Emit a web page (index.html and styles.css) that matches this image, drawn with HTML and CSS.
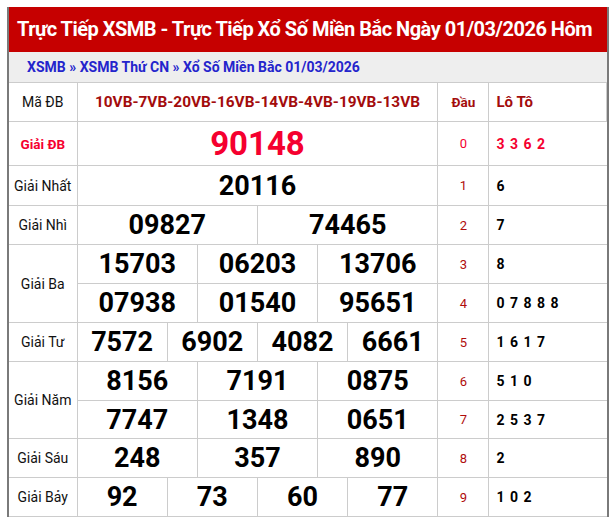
FILE: index.html
```html
<!DOCTYPE html>
<html lang="vi">
<head>
<meta charset="utf-8">
<link rel="stylesheet" href="styles.css">
</head>
<body>
<div class="box">
  <h1 class="title">Trực Tiếp XSMB - Trực Tiếp Xổ Số Miền Bắc Ngày 01/03/2026 Hôm</h1>
  <div class="crumb"><a>XSMB</a> » <a>XSMB Thứ CN</a> » <a>Xổ Số Miền Bắc 01/03/2026</a></div>
  <table class="kq">
    <colgroup>
      <col class="c-lbl">
      <col class="c-n"><col class="c-n"><col class="c-n"><col class="c-n"><col class="c-n"><col class="c-n">
      <col class="c-n"><col class="c-n"><col class="c-n"><col class="c-n"><col class="c-n"><col class="c-n">
      <col class="c-dau">
      <col class="c-lo">
    </colgroup>
    <tr class="r-ma">
      <td class="lbl">Mã ĐB</td>
      <td colspan="12" class="ma">10VB-7VB-20VB-16VB-14VB-4VB-19VB-13VB</td>
      <td class="dau-h">Đầu</td>
      <td class="lo-h">Lô Tô</td>
    </tr>
    <tr class="r-db">
      <td class="lbl red">Giải ĐB</td>
      <td colspan="12" class="num db">90148</td>
      <td class="dau d0">0</td>
      <td class="lo red">3 3 6 2</td>
    </tr>
    <tr class="r-1">
      <td class="lbl">Giải Nhất</td>
      <td colspan="12" class="num">20116</td>
      <td class="dau">1</td>
      <td class="lo">6</td>
    </tr>
    <tr>
      <td class="lbl">Giải Nhì</td>
      <td colspan="6" class="num">09827</td>
      <td colspan="6" class="num">74465</td>
      <td class="dau">2</td>
      <td class="lo">7</td>
    </tr>
    <tr>
      <td class="lbl" rowspan="2">Giải Ba</td>
      <td colspan="4" class="num">15703</td>
      <td colspan="4" class="num">06203</td>
      <td colspan="4" class="num">13706</td>
      <td class="dau">3</td>
      <td class="lo">8</td>
    </tr>
    <tr>
      <td colspan="4" class="num">07938</td>
      <td colspan="4" class="num">01540</td>
      <td colspan="4" class="num">95651</td>
      <td class="dau">4</td>
      <td class="lo">0 7 8 8 8</td>
    </tr>
    <tr>
      <td class="lbl">Giải Tư</td>
      <td colspan="3" class="num">7572</td>
      <td colspan="3" class="num">6902</td>
      <td colspan="3" class="num">4082</td>
      <td colspan="3" class="num">6661</td>
      <td class="dau">5</td>
      <td class="lo">1 6 1 7</td>
    </tr>
    <tr>
      <td class="lbl" rowspan="2">Giải Năm</td>
      <td colspan="4" class="num">8156</td>
      <td colspan="4" class="num">7191</td>
      <td colspan="4" class="num">0875</td>
      <td class="dau">6</td>
      <td class="lo">5 1 0</td>
    </tr>
    <tr class="r-n2">
      <td colspan="4" class="num">7747</td>
      <td colspan="4" class="num">1348</td>
      <td colspan="4" class="num">0651</td>
      <td class="dau">7</td>
      <td class="lo">2 5 3 7</td>
    </tr>
    <tr>
      <td class="lbl">Giải Sáu</td>
      <td colspan="4" class="num">248</td>
      <td colspan="4" class="num">357</td>
      <td colspan="4" class="num">890</td>
      <td class="dau">8</td>
      <td class="lo">2</td>
    </tr>
    <tr>
      <td class="lbl">Giải Bảy</td>
      <td colspan="3" class="num">92</td>
      <td colspan="3" class="num">73</td>
      <td colspan="3" class="num">60</td>
      <td colspan="3" class="num">77</td>
      <td class="dau">9</td>
      <td class="lo">1 0 2</td>
    </tr>
  </table>
</div>
</body>
</html>
```
FILE: styles.css
```css
html, body {
  margin: 0;
  padding: 0;
  background: #ffffff;
}
body {
  font-family: Roboto, "Liberation Sans", Arial, sans-serif;
  color: #000;
}
.box {
  margin: 7px 4px 0 7px;
  width: 598px;
  border-left: 2px solid #7a7a7a;
  border-right: 2px solid #7a7a7a;
}
.title {
  margin: 0;
  height: 45px;
  line-height: 45px;
  background: #c60000;
  color: #fff;
  font-size: 20px;
  font-weight: 700;
  padding-left: 8px;
  white-space: nowrap;
  overflow: hidden;
  letter-spacing: -0.5px;
}
.crumb {
  height: 30px;
  line-height: 30px;
  background: #eeeeee;
  padding-left: 18px;
  font-size: 14px;
  font-weight: 700;
  color: #2424cc;
  border-bottom: 1px solid #cccccc;
  white-space: nowrap;
}
.crumb a { color: #2424cc; }
.kq {
  width: 598px;
  border-collapse: collapse;
  table-layout: fixed;
}
.c-lbl { width: 68px; }
.c-n { width: 30.08px; }
.c-dau { width: 51px; }
.c-lo { width: 118px; }
.kq td {
  border: 1px solid #cccccc;
  height: 38px;
  padding: 0;
  text-align: center;
  vertical-align: middle;
}
.kq tr > td:first-child.lbl { border-left: none; }
.kq td.lo { border-right: none; }
.kq tr:first-child td { border-top: none; }
.r-db td { height: 43px; }
.r-1 td { height: 39px; }
.r-n2 td { height: 37px; }
.lbl {
  font-size: 14px;
  color: #111;
}
.lbl.red {
  color: #f5002f;
  font-weight: 700;
  font-size: 13.5px;
}
.ma {
  font-size: 15.4px;
  font-weight: 700;
  color: #a30c0c;
}
.dau-h {
  font-size: 13.5px;
  font-weight: 700;
  color: #a30c0c;
}
.lo-h {
  text-align: left !important;
  padding-left: 7px !important;
  font-size: 15px;
  font-weight: 700;
  color: #a30c0c;
}
.num {
  font-size: 27px;
  font-weight: 700;
  color: #000;
}
.num.db {
  font-size: 33px;
  color: #f5002f;
}
.dau {
  font-size: 13px;
  color: #b00c0c;
}
.dau.d0 { color: #f5002f; }
.lo {
  text-align: left !important;
  padding-left: 7px !important;
  font-size: 14px;
  font-weight: 700;
  letter-spacing: 1px;
  color: #000;
}
.lo.red { color: #f5002f; }
```
